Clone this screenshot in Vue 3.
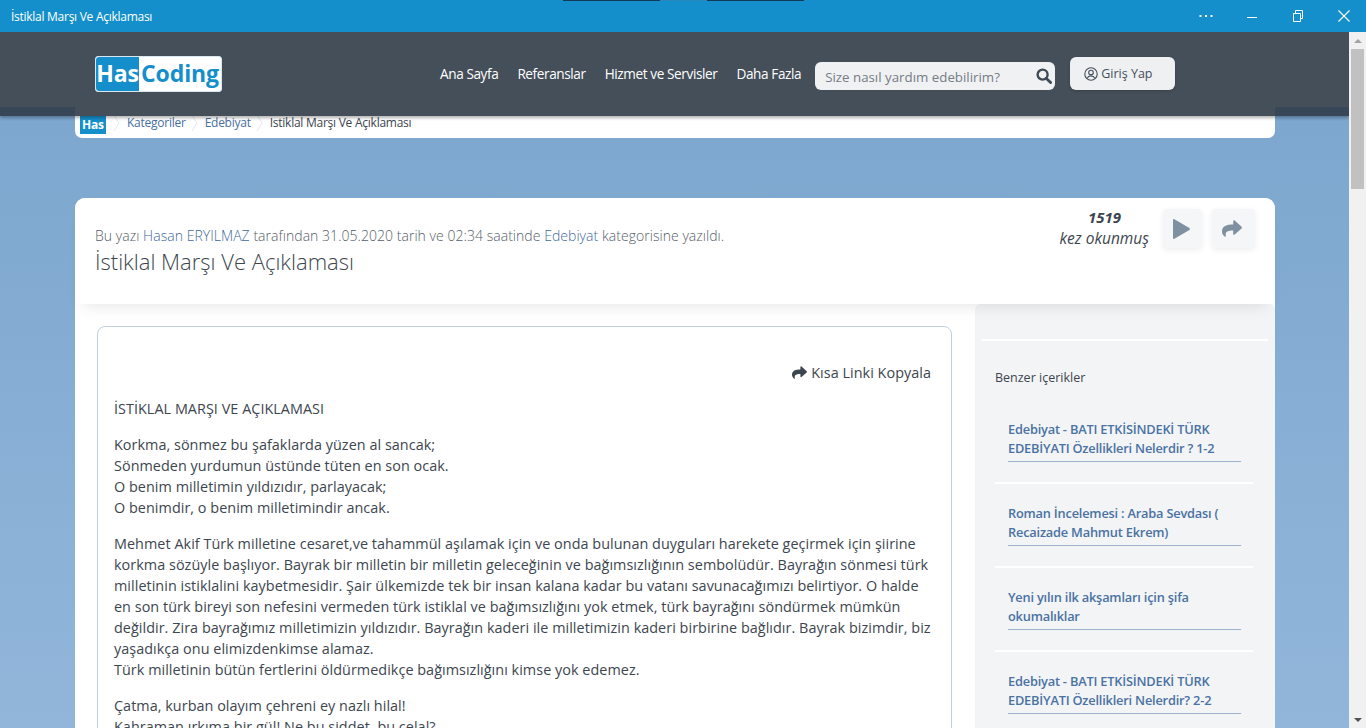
<script setup>
const related = [
  ['Edebiyat - BATI ETKİSİNDEKİ TÜRK', 'EDEBİYATI Özellikleri Nelerdir ? 1-2'],
  ['Roman İncelemesi : Araba Sevdası (', 'Recaizade Mahmut Ekrem)'],
  ['Yeni yılın ilk akşamları için şifa', 'okumalıklar'],
  ['Edebiyat - BATI ETKİSİNDEKİ TÜRK', 'EDEBİYATI Özellikleri Nelerdir? 2-2']
]
const nav = ['Ana Sayfa', 'Referanslar', 'Hizmet ve Servisler', 'Daha Fazla']
</script>

<template>
  <div class="window">
    <header class="titlebar">
      <span class="wintitle">İstiklal Marşı Ve Açıklaması</span>
      <div class="tabline"><i class="dark"></i><i class="blue"></i><i class="dark"></i></div>
      <div class="winctl">
        <svg width="14" height="14" viewBox="0 0 14 14"><g fill="#fff"><rect x="0.500" y="6" width="2" height="2"/><rect x="6" y="6" width="2" height="2"/><rect x="11.500" y="6" width="2" height="2"/></g></svg>
        <svg width="14" height="14" viewBox="0 0 14 14"><path d="M2 8.500h10" stroke="#fff" fill="none"/></svg>
        <svg width="14" height="14" viewBox="0 0 14 14"><path d="M2.500 4.500h7v8h-7z M4.500 4.500V1.500h7v8h-2" stroke="#fff" fill="none"/></svg>
        <svg width="14" height="14" viewBox="0 0 14 14"><path d="M1.500 1.500l11 11M12.500 1.500l-11 11" stroke="#fff" fill="none" stroke-width="1.100"/></svg>
      </div>
    </header>
    <div class="viewport">
      <div class="page">
        <div class="navbar">
          <div class="logo"><span class="lhas">Has</span><span class="lcoding">Coding</span></div>
          <nav class="menu">
            <a v-for="n in nav" :key="n">{{ n }}</a>
          </nav>
          <div class="search">
            <span class="ph">Size nasıl yardım edebilirim?</span>
            <svg width="16" height="16" viewBox="0 0 16 16"><circle cx="6.600" cy="6.600" r="5" fill="none" stroke="#3f4a55" stroke-width="2.400"/><path d="M10.400 10.400l4.200 4.200" stroke="#3f4a55" stroke-width="2.800" stroke-linecap="round"/></svg>
          </div>
          <div class="login">
            <svg width="14" height="14" viewBox="0 0 14 14"><circle cx="7" cy="7" r="6.200" fill="none" stroke="#454f5a" stroke-width="1.100"/><circle cx="7" cy="5.600" r="2.300" fill="none" stroke="#454f5a" stroke-width="1.100"/><path d="M3.200 11.200c.8-1.700 2.200-2.300 3.800-2.300s3 .6 3.800 2.300" fill="none" stroke="#454f5a" stroke-width="1.100"/></svg>
            <span>Giriş Yap</span>
          </div>
        </div>
        <div class="band left"></div>
        <div class="band right"></div>
        <div class="wrap">
          <div class="crumbs">
            <span class="chas">Has</span>
            <svg class="sep" width="8" height="18" viewBox="0 0 8 18"><path d="M1 1l5 8-5 8" fill="none" stroke="#e6e9ec"/></svg>
            <a>Kategoriler</a>
            <svg class="sep" width="8" height="18" viewBox="0 0 8 18"><path d="M1 1l5 8-5 8" fill="none" stroke="#e6e9ec"/></svg>
            <a>Edebiyat</a>
            <svg class="sep" width="8" height="18" viewBox="0 0 8 18"><path d="M1 1l5 8-5 8" fill="none" stroke="#e6e9ec"/></svg>
            <span class="cur">İstiklal Marşı Ve Açıklaması</span>
          </div>
          <section class="card">
            <div class="cardhead">
              <div class="headtext">
                <p class="meta">Bu yazı <a>Hasan ERYILMAZ</a> tarafından 31.05.2020 tarih ve 02:34 saatinde <a>Edebiyat</a> kategorisine yazıldı.</p>
                <h1>İstiklal Marşı Ve Açıklaması</h1>
              </div>
              <div class="reads"><b>1519</b><em>kez okunmuş</em></div>
              <div class="sq play">
                <svg width="17" height="20" viewBox="0 0 17 20"><path d="M0 1v18c0 .8.700 1.200 1.400.8l15-8.900c.7-.4.700-1.400 0-1.800L1.400.200C.7-.2 0 .2 0 1z" fill="#7f90a1"/></svg>
              </div>
              <div class="sq share">
                <svg width="20" height="17" viewBox="0 0 20 17"><path d="M19.600 6.700L12.700.5c-.6-.5-1.500-.1-1.500.7v3.300C5 4.600 0 6 0 11.400c0 2.300 1.400 4.300 3 5.300.4.300 1 0 .9-.6C3 12.300 4.500 10.500 11.200 10.400v3.500c0 .8.900 1.200 1.500.7l6.900-6.200c.4-.4.400-1.300 0-1.700z" fill="#7f90a1"/></svg>
              </div>
            </div>
            <div class="cardbody">
              <article class="article">
                <div class="copy">
                  <svg width="15" height="13" viewBox="0 0 20 17"><path d="M19.600 6.700L12.700.5c-.6-.5-1.500-.1-1.500.7v3.300C5 4.600 0 6 0 11.400c0 2.300 1.400 4.300 3 5.300.4.300 1 0 .9-.6C3 12.300 4.500 10.500 11.200 10.400v3.500c0 .8.900 1.200 1.500.7l6.900-6.200c.4-.4.400-1.300 0-1.700z" fill="#3d464f"/></svg>
                  <span>Kısa Linki Kopyala</span>
                </div>
                <p>İSTİKLAL MARŞI VE AÇIKLAMASI</p>
                <p>Korkma, sönmez bu şafaklarda yüzen al sancak;<br>Sönmeden yurdumun üstünde tüten en son ocak.<br>O benim milletimin yıldızıdır, parlayacak;<br>O benimdir, o benim milletimindir ancak.</p>
                <p>Mehmet Akif Türk milletine cesaret,ve tahammül aşılamak için ve onda bulunan duyguları harekete geçirmek için şiirine korkma sözüyle başlıyor. Bayrak bir milletin bir milletin geleceğinin ve bağımsızlığının sembolüdür. Bayrağın sönmesi türk milletinin istiklalini kaybetmesidir. Şair ülkemizde tek bir insan kalana kadar bu vatanı savunacağımızı belirtiyor. O halde en son türk bireyi son nefesini vermeden türk istiklal ve bağımsızlığını yok etmek, türk bayrağını söndürmek mümkün değildir. Zira bayrağımız milletimizin yıldızıdır. Bayrağın kaderi ile milletimizin kaderi birbirine bağlıdır. Bayrak bizimdir, biz yaşadıkça onu elimizdenkimse alamaz.<br>Türk milletinin bütün fertlerini öldürmedikçe bağımsızlığını kimse yok edemez.</p>
                <p>Çatma, kurban olayım çehreni ey nazlı hilal!<br>Kahraman ırkıma bir gül! Ne bu şiddet, bu celal?</p>
              </article>
              <aside class="side">
                <div class="rule first"></div>
                <div class="sidetitle">Benzer içerikler</div>
                <template v-for="(r, i) in related" :key="i">
                  <div class="rel"><a>{{ r[0] }}<br>{{ r[1] }}</a></div>
                  <div class="rule"></div>
                </template>
              </aside>
            </div>
          </section>
        </div>
      </div>
      <div class="scrollbar">
        <span class="arrow up"></span>
        <span class="thumb"></span>
        <span class="arrow down"></span>
      </div>
    </div>
  </div>
</template>

<style>
html, body { margin: 0; padding: 0; overflow: hidden; }
</style>

<style scoped>
.window { width: 1366px; height: 728px; display: flex; flex-direction: column; overflow: hidden; font-family: "Open Sans", sans-serif; color: #3d464f; }
.titlebar { height: 32px; flex: none; background: #158fcb; color: #fff; display: flex; align-items: center; position: relative; padding-left: 11px; }
.wintitle { font: 12px "Open Sans", sans-serif; letter-spacing: -0.27px; }
.tabline { position: absolute; left: 563px; top: 0; display: flex; height: 1px; }
.tabline i { display: block; }
.tabline .dark { width: 97px; background: #123a56; }
.tabline .blue { width: 47px; background: #2a86bf; }
.winctl { margin-left: auto; display: flex; align-items: center; gap: 32px; padding-right: 15px; }
.viewport { flex: 1; display: flex; min-height: 0; }
.page { flex: 1; min-width: 0; position: relative; overflow: hidden; background: linear-gradient(180deg, #7aa5cd 0%, #92b6da 100%); }
.navbar { position: absolute; left: 0; right: 0; top: 0; z-index: 3; height: 84px; background: #454f5a; display: flex; align-items: flex-start; padding-left: 95px; box-sizing: border-box; box-shadow: 0 2px 3px rgba(0,0,0,.3); }
.band { position: absolute; z-index: 4; top: 75px; height: 9px; background: #384757; }
.band.left { left: 0; width: 75px; }
.band.right { right: 0; width: 74px; }
.logo { margin-top: 24px; width: 127px; height: 36px; border-radius: 3px; background: #fff; display: flex; box-sizing: border-box; border: 1px solid #d9e7f0; overflow: hidden; font: 700 23px/33px "Open Sans", sans-serif; }
.lhas { background: #158fcb; color: #fff; width: 43px; text-align: center; flex: none; border-radius: 3px 0 0 3px; letter-spacing: -.2px; }
.lcoding { color: #158fcb; padding-left: 2px; letter-spacing: -.1px; }
.menu { margin-left: 218px; margin-top: 32px; display: flex; gap: 19px; font: 13.600px/19px "Open Sans", sans-serif; color: #fff; letter-spacing: -.4px; }
.search { margin-left: 14px; margin-top: 30px; width: 240px; height: 28px; border-radius: 6px; background: #f0f1f3; display: flex; align-items: center; justify-content: space-between; box-sizing: border-box; padding: 0 3px 0 10px; color: #757c84; font-size: 13.300px; }
.ph { margin-top: 2px; }
.login { margin-left: 15px; margin-top: 25px; width: 105px; height: 33px; border-radius: 6px; background: #eef0f2; display: flex; align-items: center; gap: 3px; box-sizing: border-box; padding-left: 14px; font-size: 12.500px; color: #454f5a; box-shadow: 0 1px 3px rgba(0,0,0,.2); }
.wrap { width: 1200px; margin-left: 75px; padding-top: 60px; position: relative; }
.crumbs { height: 46px; background: #fff; border-radius: 0 0 7px 7px; display: flex; align-items: flex-end; box-sizing: border-box; padding: 0 0 6px 5px; font-size: 12px; letter-spacing: -.25px; line-height: 18px; }
.crumbs .chas { background: #158fcb; color: #fff; width: 26px; margin-right: 7px; margin-bottom: -2px; height: 20px; text-align: center; font: 700 12px/21px "Open Sans", sans-serif; letter-spacing: -.2px; }
.crumbs a { color: #48709e; }
.crumbs .sep { margin: 0 6px 0 0; }
.crumbs a + .sep { margin-left: 5px; }
.crumbs .cur { color: #3d464f; }
.card { margin-top: 60px; background: #fff; border-radius: 10px 10px 0 0; }
.cardhead { height: 106px; background: #fff; border-radius: 10px 10px 0 0; display: flex; align-items: flex-start; box-sizing: border-box; padding: 11px 20px 0 20px; box-shadow: 0 10px 16px -8px rgba(0,0,0,.1); position: relative; z-index: 1; }
.headtext { flex: 1; padding-top: 17px; }
.meta { margin: 0; font-weight: 300; font-size: 14px; line-height: 19px; color: #555e67; letter-spacing: .04px; }
.meta a { color: #3f6a9b; }
h1 { margin: 1px 0 0; font-weight: 300; font-size: 22px; line-height: 30px; color: #3d464f; }
.reads { display: flex; flex-direction: column; align-items: flex-end; margin-top: -2px; margin-right: 14px; font-size: 15.500px; line-height: 21px; color: #3d464f; }
.reads b { font-style: italic; font-weight: 700; font-size: 15px; margin-right: 28px; }
.reads em { font-style: italic; }
.sq { height: 39px; background: #f5f6f8; border-radius: 4px; display: flex; align-items: center; justify-content: center; box-shadow: 0 2px 6px rgba(0,0,0,.07); box-sizing: border-box; padding-right: 3px; }
.sq.play { width: 39px; }
.sq.share { width: 43px; margin-left: 10px; }
.cardbody { display: flex; align-items: flex-start; }
.article { width: 855px; height: 500px; margin: 22px 23px 0 22px; flex: none; box-sizing: border-box; background: #fff; border: 1px solid #c2d0e0; border-radius: 8px; padding: 35px 20px 0 16px; font-size: 14.400px; line-height: 21px; color: #3d464f; letter-spacing: .04px; }
.article p { margin: 0 0 15px; }
.copy { display: flex; justify-content: flex-end; align-items: center; gap: 4px; height: 21px; margin-bottom: 15px; }
.side { width: 300px; flex: none; box-sizing: border-box; background: #f3f4f6; height: 600px; border-radius: 6px 6px 0 0; padding-top: 35px; }
.rule { height: 2px; background: #fff; width: 258px; margin-left: 20px; }
.rule.first { width: 287px; margin-left: 6px; }
.sidetitle { font-size: 12.500px; line-height: 18px; margin: 28px 0 0 20px; color: #3d464f; }
.rel { padding: 20px 0 20px 33px; }
.sidetitle + .rel { padding-top: 33px; }
.rel a { display: block; width: 233px; font-size: 12.800px; font-weight: 600; line-height: 19px; color: #4a72a3; border-bottom: 1px solid #9db3cd; letter-spacing: -.2px; padding-bottom: 3px; white-space: nowrap; }
.scrollbar { width: 17px; flex: none; background: #f1f1f1; display: flex; flex-direction: column; align-items: center; }
.thumb { width: 13px; height: 140px; background: #c1c1c1; margin-top: 6px; }
.arrow { width: 0; height: 0; border-left: 4px solid transparent; border-right: 4px solid transparent; margin-top: 7px; }
.arrow.up { border-bottom: 4px solid #a3a3a3; }
.arrow.down { border-top: 4px solid #505050; margin-top: auto; margin-bottom: 6px; }
</style>
